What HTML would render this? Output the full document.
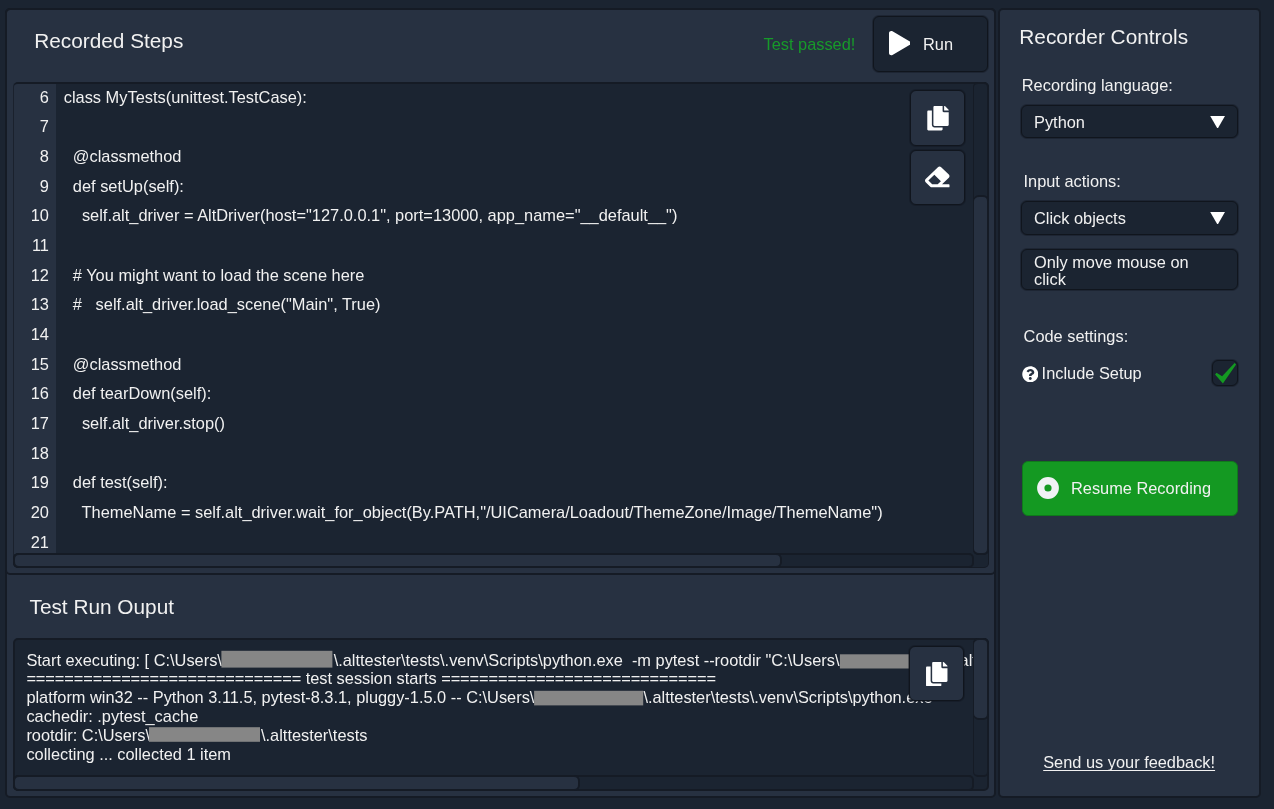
<!DOCTYPE html>
<html lang="en">
<head>
<meta charset="utf-8">
<title>Recorder</title>
<style>
  :root{
    --bg:#1b2431;
    --panel:#273141;
    --dark:#1b2431;
    --line:#151b25;
    --txt:#f1f1f1;
    --green:#149922;
  }
  html,body{margin:0;padding:0;}
  body{
    width:1274px;height:809px;overflow:hidden;position:relative;
    background:var(--bg);color:var(--txt);
    font-family:"Liberation Sans",sans-serif;font-size:16.38px;line-height:19px;
  }
  #app{position:absolute;left:0;top:0;width:1274px;height:809px;overflow:hidden;background:var(--bg);will-change:transform;}
  .abs{position:absolute;box-sizing:border-box;}
  .panel{background:var(--panel);border:2px solid var(--line);border-radius:5px;}
  .well{background:var(--dark);border:2px solid var(--line);border-radius:5px;}
  .btn{background:var(--panel);border:1px solid #10151d;border-radius:6px;box-shadow:0 0 0 1px rgba(16,21,29,.4);}
  .wbtn{background:var(--dark);border:1px solid #10151d;border-radius:6px;box-shadow:0 0 0 1px rgba(16,21,29,.4);}
  .title{font-size:20.8px;line-height:24px;white-space:nowrap;}
  .lbl{white-space:nowrap;}
  svg{display:block;position:absolute;}
  .red{display:inline-block;width:111px;height:1px;}
  .ln{height:29.66px;line-height:29.66px;}
</style>
</head>
<body>
<div id="app">

<!-- LEFT COLUMN -->
<div class="abs panel" id="leftcol" style="left:5px;top:8px;width:991px;height:790px;"></div>
<div class="abs" id="steps" style="left:5px;top:8px;width:991px;height:567px;border:2px solid var(--line);border-radius:5px;"></div>

<div class="abs title" style="left:34.2px;top:28.6px;">Recorded Steps</div>
<div class="abs lbl" style="left:763.5px;top:35px;color:#179a2a;">Test passed!</div>

<!-- Run button -->
<div class="abs wbtn" id="run" style="left:873px;top:16px;width:115px;height:56px;">
  <svg viewBox="0 0 448 512" preserveAspectRatio="none" style="left:14.5px;top:14.4px;width:21.6px;height:24.3px;"><path fill="#fff" d="M424.4 214.7L72.4 6.6C43.8-10.3 0 6.1 0 47.9V464c0 37.5 40.7 60.1 72.4 41.3l352-208c31.4-18.5 31.5-64.1 0-82.6z"/></svg>
  <div class="abs lbl" style="left:49px;top:18px;">Run</div>
</div>

<!-- Code area -->
<div class="abs well" id="code" style="left:13px;top:82px;width:976px;height:486px;overflow:hidden;border-width:2px 1px 1px 1px;border-left-color:#1a212d;border-radius:5px;">
  <div class="abs" id="gutter" style="left:0;top:0;width:42px;height:470px;background:var(--panel);"></div>
  <div class="abs" id="nums" style="left:0;top:-1.35px;width:34.9px;text-align:right;font-size:16.4px;"><div class="ln">6</div><div class="ln">7</div><div class="ln">8</div><div class="ln">9</div><div class="ln">10</div><div class="ln">11</div><div class="ln">12</div><div class="ln">13</div><div class="ln">14</div><div class="ln">15</div><div class="ln">16</div><div class="ln">17</div><div class="ln">18</div><div class="ln">19</div><div class="ln">20</div><div class="ln">21</div></div>
  <div class="abs" id="lines" style="left:49.7px;top:-1.35px;white-space:pre;font-size:16.4px;"><div class="ln">class MyTests(unittest.TestCase):</div><div class="ln">&nbsp;</div><div class="ln">  @classmethod</div><div class="ln">  def setUp(self):</div><div class="ln">    self.alt_driver = AltDriver(host="127.0.0.1", port=13000, app_name="__default__")</div><div class="ln">&nbsp;</div><div class="ln">  # You might want to load the scene here</div><div class="ln">  #   self.alt_driver.load_scene("Main", True)</div><div class="ln">&nbsp;</div><div class="ln">  @classmethod</div><div class="ln">  def tearDown(self):</div><div class="ln">    self.alt_driver.stop()</div><div class="ln">&nbsp;</div><div class="ln">  def test(self):</div><div class="ln">    ThemeName = self.alt_driver.wait_for_object(By.PATH,"/UICamera/Loadout/ThemeZone/Image/ThemeName")</div><div class="ln">&nbsp;</div></div>
</div>

<!-- code overlay buttons -->
<div class="abs btn" id="copy1" style="left:910px;top:90px;width:55px;height:56px;">
  <svg viewBox="0 0 448 512" style="left:16px;top:15px;width:22px;height:24.5px;"><path fill="#fff" d="M320 448v40c0 13.255-10.745 24-24 24H24c-13.255 0-24-10.745-24-24V120c0-13.255 10.745-24 24-24h72v296c0 30.879 25.121 56 56 56h168zm0-344V0H152c-13.255 0-24 10.745-24 24v368c0 13.255 10.745 24 24 24h272c13.255 0 24-10.745 24-24V128H344c-13.2 0-24-10.8-24-24zm120.971-31.029L375.029 7.029A24 24 0 0 0 358.059 0H352v96h96v-6.059a24 24 0 0 0-7.029-16.97z"/></svg>
</div>
<div class="abs btn" id="erase" style="left:910px;top:150px;width:55px;height:55px;">
  <svg viewBox="0 0 512 512" preserveAspectRatio="none" style="left:14.1px;top:14.3px;width:24.5px;height:23.8px;"><path fill="#fff" d="M497.941 273.941c18.745-18.745 18.745-49.137 0-67.882l-160-160c-18.745-18.745-49.136-18.746-67.883 0l-256 256c-18.745 18.745-18.745 49.137 0 67.882l96 96A48.004 48.004 0 0 0 144 480h356c6.627 0 12-5.373 12-12v-40c0-6.627-5.373-12-12-12H355.883l142.058-142.059zm-302.627-62.627l137.373 137.373L265.373 416H150.628l-80-80 124.686-124.686z"/></svg>
</div>

<!-- code scrollbars -->
<div class="abs" id="vtrack1" style="left:973px;top:82px;width:16px;height:473px;background:var(--dark);border:2px solid var(--line);border-left-width:1px;border-radius:5px;"></div>
<div class="abs panel" id="vthumb1" style="left:973px;top:195px;width:16px;height:360px;border-radius:6px;border-left-width:1px;"></div>
<div class="abs" id="htrack1" style="left:13px;top:553px;width:961px;height:15px;background:var(--dark);border:2px solid var(--line);border-radius:5px;"></div>
<div class="abs panel" id="hthumb1" style="left:13px;top:553px;width:769px;height:15px;border-radius:6px;"></div>

<!-- OUTPUT -->
<div class="abs title" style="left:29.5px;top:594.5px;">Test Run Ouput</div>
<div class="abs well" id="out" style="left:13px;top:638px;width:976px;height:153px;overflow:hidden;">
  <div class="abs" id="outtxt" style="left:11.4px;top:10.6px;white-space:pre;line-height:18.8px;">Start executing: [ C:\Users\<span class="red" style="width:111.8px"></span>\.alttester\tests\.venv\Scripts\python.exe  -m pytest --rootdir "C:\Users\<span class="red"></span>\.alttester\tests"
<span style="letter-spacing:-0.08px">=============================</span> test session starts <span style="letter-spacing:-0.08px">=============================</span>
platform win32 -- Python 3.11.5, pytest-8.3.1, pluggy-1.5.0 -- C:\Users\<span class="red" style="width:109px"></span>\.alttester\tests\.venv\Scripts\python.exe
cachedir: .pytest_cache
rootdir: C:\Users\<span class="red"></span>\.alttester\tests
collecting ... collected 1 item</div>
  <svg viewBox="0 0 960 150" style="left:0;top:0;width:960px;height:150px;"><g fill="#868686"><rect x="206.4" y="10.8" width="111" height="16.8"/><rect x="824.9" y="14.3" width="111" height="14.2"/><rect x="519.1" y="50.8" width="109.1" height="14.6"/><rect x="134" y="87.2" width="111" height="14.6"/></g></svg>
</div>
<div class="abs btn" id="copy2" style="left:909px;top:646px;width:55px;height:55px;">
  <svg viewBox="0 0 448 512" style="left:16px;top:14.6px;width:21.5px;height:24.5px;"><path fill="#fff" d="M320 448v40c0 13.255-10.745 24-24 24H24c-13.255 0-24-10.745-24-24V120c0-13.255 10.745-24 24-24h72v296c0 30.879 25.121 56 56 56h168zm0-344V0H152c-13.255 0-24 10.745-24 24v368c0 13.255 10.745 24 24 24h272c13.255 0 24-10.745 24-24V128H344c-13.2 0-24-10.8-24-24zm120.971-31.029L375.029 7.029A24 24 0 0 0 358.059 0H352v96h96v-6.059a24 24 0 0 0-7.029-16.97z"/></svg>
</div>
<div class="abs" id="vtrack2" style="left:973px;top:638px;width:16px;height:139px;background:var(--dark);border:2px solid var(--line);border-left-width:1px;border-radius:5px;"></div>
<div class="abs panel" id="vthumb2" style="left:973px;top:638px;width:16px;height:82px;border-radius:6px;border-left-width:1px;"></div>
<div class="abs" id="htrack2" style="left:13px;top:775px;width:961px;height:16px;background:var(--dark);border:2px solid var(--line);border-radius:5px;"></div>
<div class="abs panel" id="hthumb2" style="left:13px;top:775px;width:567px;height:16px;border-radius:6px;"></div>

<!-- RIGHT PANEL -->
<div class="abs panel" id="right" style="left:998px;top:8px;width:263px;height:790px;"></div>
<div class="abs title" style="left:1019.3px;top:24.6px;">Recorder Controls</div>

<div class="abs lbl" style="left:1021.8px;top:75.5px;">Recording language:</div>
<div class="abs wbtn" id="dd1" style="left:1021px;top:105px;width:217px;height:33px;">
  <div class="abs lbl" style="left:12px;top:7px;">Python</div>
  <svg viewBox="0 0 15 13" style="left:188.2px;top:9.6px;width:15.2px;height:12.8px;"><path fill="#fff" d="M0 0H15L7.5 13Z"/></svg>
</div>

<div class="abs lbl" style="left:1023.5px;top:171.5px;">Input actions:</div>
<div class="abs wbtn" id="dd2" style="left:1021px;top:201px;width:217px;height:34px;">
  <div class="abs lbl" style="left:12px;top:7px;">Click objects</div>
  <svg viewBox="0 0 15 13" style="left:188.2px;top:9.6px;width:15.2px;height:12.8px;"><path fill="#fff" d="M0 0H15L7.5 13Z"/></svg>
</div>
<div class="abs wbtn" id="dd3" style="left:1021px;top:249px;width:217px;height:41px;">
  <div class="abs" style="left:12px;top:4px;width:185px;line-height:16.5px;">Only move mouse on click</div>
</div>

<div class="abs lbl" style="left:1023.6px;top:327px;">Code settings:</div>
<svg viewBox="0 0 512 512" style="left:1021.7px;top:365.7px;width:16.6px;height:16.6px;"><path fill="#fff" d="M504 256c0 136.997-111.043 248-248 248S8 392.997 8 256C8 119.083 119.043 8 256 8s248 111.083 248 248zM262.655 90c-54.497 0-89.255 22.957-116.549 63.758-3.536 5.286-2.353 12.415 2.715 16.258l34.699 26.31c5.205 3.947 12.621 3.008 16.665-2.122 17.864-22.658 30.113-35.797 57.303-35.797 20.429 0 45.698 13.148 45.698 32.958 0 14.976-12.363 22.667-32.534 33.976C247.128 238.528 216 254.941 216 296v4c0 6.627 5.373 12 12 12h56c6.627 0 12-5.373 12-12v-1.333c0-28.462 83.186-29.647 83.186-106.667 0-58.002-60.165-102-116.531-102zM256 338c-25.365 0-46 20.635-46 46 0 25.364 20.635 46 46 46s46-20.636 46-46c0-25.365-20.635-46-46-46z"/></svg>
<div class="abs lbl" style="left:1041.6px;top:364px;">Include Setup</div>
<div class="abs wbtn" id="chk" style="left:1212px;top:360px;width:26px;height:26px;border-radius:6px;">
  <svg viewBox="0 0 24 24" style="left:0;top:0;width:24px;height:24px;"><path fill="#149922" d="M2.1 13.5L3.5 11.8L9.1 15.2L21.6 1.9L23.1 3.6L9.9 22.4Z"/></svg>
</div>

<div class="abs" id="resume" style="left:1022px;top:461px;width:216px;height:55px;background:#149922;border:1px solid #0f7a1b;border-radius:6px;">
  <svg viewBox="0 0 24 24" style="left:13.1px;top:14.2px;width:24px;height:24px;"><path fill="#f0f2f5" fill-rule="evenodd" d="M12 1.1A10.9 10.9 0 1 0 12 22.9A10.9 10.9 0 1 0 12 1.1ZM12 8.4A3.6 3.6 0 1 1 12 15.6A3.6 3.6 0 1 1 12 8.4Z"/></svg>
  <div class="abs lbl" style="left:48px;top:16.8px;">Resume Recording</div>
</div>

<div class="abs lbl" style="left:1043.2px;top:753px;text-decoration:underline;text-underline-offset:2.3px;text-decoration-skip-ink:none;text-decoration-thickness:1px;">Send us your feedback!</div>

</div>
</body>
</html>
